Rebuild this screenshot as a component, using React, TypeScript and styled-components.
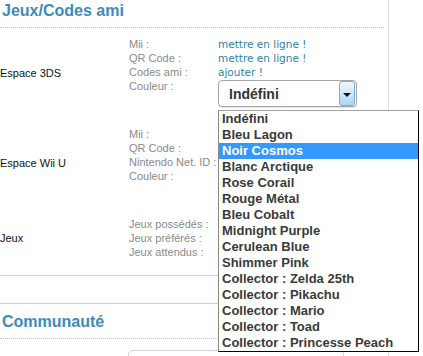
import React from "react";
import styled, { createGlobalStyle } from "styled-components";

const colours = [
  "Indéfini",
  "Bleu Lagon",
  "Noir Cosmos",
  "Blanc Arctique",
  "Rose Corail",
  "Rouge Métal",
  "Bleu Cobalt",
  "Midnight Purple",
  "Cerulean Blue",
  "Shimmer Pink",
  "Collector : Zelda 25th",
  "Collector : Pikachu",
  "Collector : Mario",
  "Collector : Toad",
  "Collector : Princesse Peach",
];

const App = () => {
  return (
    <>
      <GlobalStyle />
      <Page>
        <MainColumn>
          <SectionTitle>Jeux/Codes ami</SectionTitle>

          <ProfileRow>
            <RowLabel>Espace 3DS</RowLabel>
            <Keys>
              <span>Mii :</span>
              <span>QR Code :</span>
              <span>Codes ami :</span>
              <span>Couleur :</span>
            </Keys>
            <Values>
              <ActionLink>mettre en ligne !</ActionLink>
              <ActionLink>mettre en ligne !</ActionLink>
              <ActionLink>ajouter !</ActionLink>
              <SelectWrap>
                <SelectBox>
                  <SelectText>Indéfini</SelectText>
                  <SelectButton>
                    <Arrow />
                  </SelectButton>
                </SelectBox>
                <OptionList>
                  {colours.map((c, i) => (
                    <OptionItem key={c} $active={i === 2}>
                      {c}
                    </OptionItem>
                  ))}
                </OptionList>
              </SelectWrap>
            </Values>
          </ProfileRow>

          <ProfileRow>
            <RowLabel>Espace Wii U</RowLabel>
            <Keys>
              <span>Mii :</span>
              <span>QR Code :</span>
              <span>Nintendo Net. ID :</span>
              <span>Couleur :</span>
            </Keys>
            <Values />
          </ProfileRow>

          <ProfileRow $last>
            <RowLabel>Jeux</RowLabel>
            <Keys>
              <span>Jeux possédés :</span>
              <span>Jeux préférés :</span>
              <span>Jeux attendus :</span>
            </Keys>
            <Values />
          </ProfileRow>

          <EmptyBand />

          <SectionTitle $spaced>Communauté</SectionTitle>
          <CommunityBox />
        </MainColumn>
        <SideColumn />
      </Page>
    </>
  );
};

export default App;

const GlobalStyle = createGlobalStyle`
  body {
    margin: 0;
    background: #fff;
    font-family: "Liberation Sans", Arial, sans-serif;
  }
`;

const Page = styled.div`
  display: flex;
  width: 423px;
  height: 356px;
  overflow: hidden;
`;

const MainColumn = styled.div`
  width: 388px;
  border-right: 1px solid #d9d9d9;
  flex-shrink: 0;
`;

const SideColumn = styled.div`
  flex: 1;
`;

const SectionTitle = styled.h2<{ $spaced?: boolean }>`
  margin: ${(p) => (p.$spaced ? "7px" : "0")} 4px 0 0;
  padding: 0 2px 5px;
  font-size: 16px;
  font-weight: bold;
  line-height: 22px;
  color: #3b8bbb;
  border-bottom: 1px dotted #bdbdbd;
`;

const ProfileRow = styled.div<{ $last?: boolean }>`
  display: grid;
  grid-template-columns: 129px 89px 1fr;
  padding: 9px 0 ${(p) => (p.$last ? "16px" : "9px")};
  min-height: ${(p) => (p.$last ? "42px" : "72px")};
`;

const RowLabel = styled.div`
  align-self: center;
  font-size: 11px;
  color: #111;
`;

const Keys = styled.div`
  display: flex;
  flex-direction: column;
  font-size: 11px;
  line-height: 14px;
  color: #8a8a8a;
  white-space: nowrap;
`;

const Values = styled.div`
  display: flex;
  flex-direction: column;
  align-items: flex-start;
`;

const ActionLink = styled.a`
  font-family: "DejaVu Sans", Verdana, sans-serif;
  font-size: 10.5px;
  line-height: 14px;
  color: #2f84a6;
  text-decoration: none;
  cursor: pointer;
`;

const SelectWrap = styled.div`
  position: relative;
  margin-top: 1px;
`;

const SelectBox = styled.div`
  display: flex;
  align-items: center;
  width: 137px;
  height: 25px;
  border: 1px solid #a8a8a8;
  border-radius: 4px;
  background: #fff;
  box-shadow: 0 1px 1px rgba(0, 0, 0, 0.12);
`;

const SelectText = styled.span`
  flex: 1;
  padding-left: 10px;
  font-size: 14px;
  font-weight: bold;
  color: #333;
`;

const SelectButton = styled.span`
  display: flex;
  align-items: center;
  justify-content: center;
  width: 14px;
  height: 23px;
  margin-right: 1px;
  border: 1px solid #78acd3;
  border-radius: 3px;
  background: linear-gradient(#eef7fd, #cfe8f8 50%, #a9d6f3);
`;

const Arrow = styled.span`
  width: 0;
  height: 0;
  border-left: 4px solid transparent;
  border-right: 4px solid transparent;
  border-top: 4px solid #111;
  margin-top: 2px;
`;

const OptionList = styled.ul`
  position: absolute;
  top: calc(100% + 3px);
  left: 0;
  z-index: 10;
  width: 199px;
  margin: 0;
  padding: 0;
  list-style: none;
  background: #fff;
  border: 1px solid;
  border-color: #a0a0a0 #000 #000 #8a8a8a;
`;

const OptionItem = styled.li<{ $active?: boolean }>`
  height: 16px;
  padding-left: 3px;
  font-size: 13px;
  font-weight: bold;
  line-height: 16px;
  white-space: nowrap;
  color: ${(p) => (p.$active ? "#fff" : "#3a3a3a")};
  background: ${(p) => (p.$active ? "#3399ff" : "transparent")};
`;

const EmptyBand = styled.div`
  height: 27px;
  border-top: 1px solid #cfcfcf;
  border-bottom: 1px solid #cfcfcf;
`;

const CommunityBox = styled.div`
  margin: 11px 0 0 128px;
  width: 214px;
  height: 40px;
  border: 1px solid #cfcfcf;
  border-radius: 5px;
`;
